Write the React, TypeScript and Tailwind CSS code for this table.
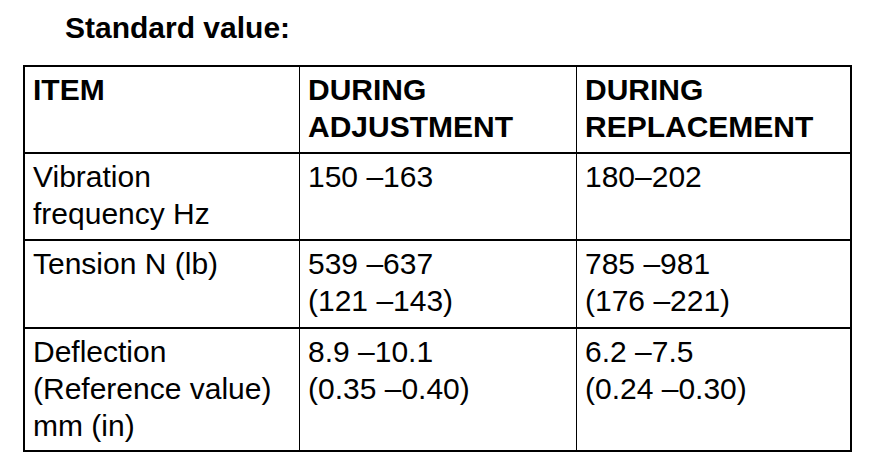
const rows = [
  {
    h: "h-[87px]",
    bold: true,
    cells: [["ITEM"], ["DURING", "ADJUSTMENT"], ["DURING", "REPLACEMENT"]],
  },
  {
    h: "h-[87px]",
    cells: [["Vibration", "frequency Hz"], ["150 –163"], ["180–202"]],
  },
  {
    h: "h-[88px]",
    cells: [["Tension N (lb)"], ["539 –637", "(121 –143)"], ["785 –981", "(176 –221)"]],
  },
  {
    h: "h-[121px]",
    cells: [
      ["Deflection", "(Reference value)", "mm (in)"],
      ["8.9 –10.1", "(0.35 –0.40)"],
      ["6.2 –7.5", "(0.24 –0.30)"],
    ],
  },
];

const widths = ["w-[275px] border-r border-black", "w-[277px] border-r border-black", "w-[273px]"];

export default function App() {
  return (
    <div className="w-[896px] h-[466px] bg-white text-black font-['Liberation_Sans',Arial,sans-serif] text-[30px] leading-[36px] overflow-hidden">
      <div className="pl-[65px] pt-[10px] font-bold">Standard value:</div>
      <div className="mt-[19px] ml-[23px] w-[829px] border-2 border-black">
        {rows.map((row, i) => (
          <div
            key={i}
            className={`flex ${row.h} ${i < rows.length - 1 ? "border-b-2 border-black" : ""} ${row.bold ? "font-bold" : ""}`}
          >
            {row.cells.map((lines, j) => (
              <div key={j} className={`${widths[j]} px-2 pt-1 leading-[37px]`}>
                {lines.map((l) => (
                  <div key={l} className="whitespace-nowrap">
                    {l}
                  </div>
                ))}
              </div>
            ))}
          </div>
        ))}
      </div>
    </div>
  );
}
